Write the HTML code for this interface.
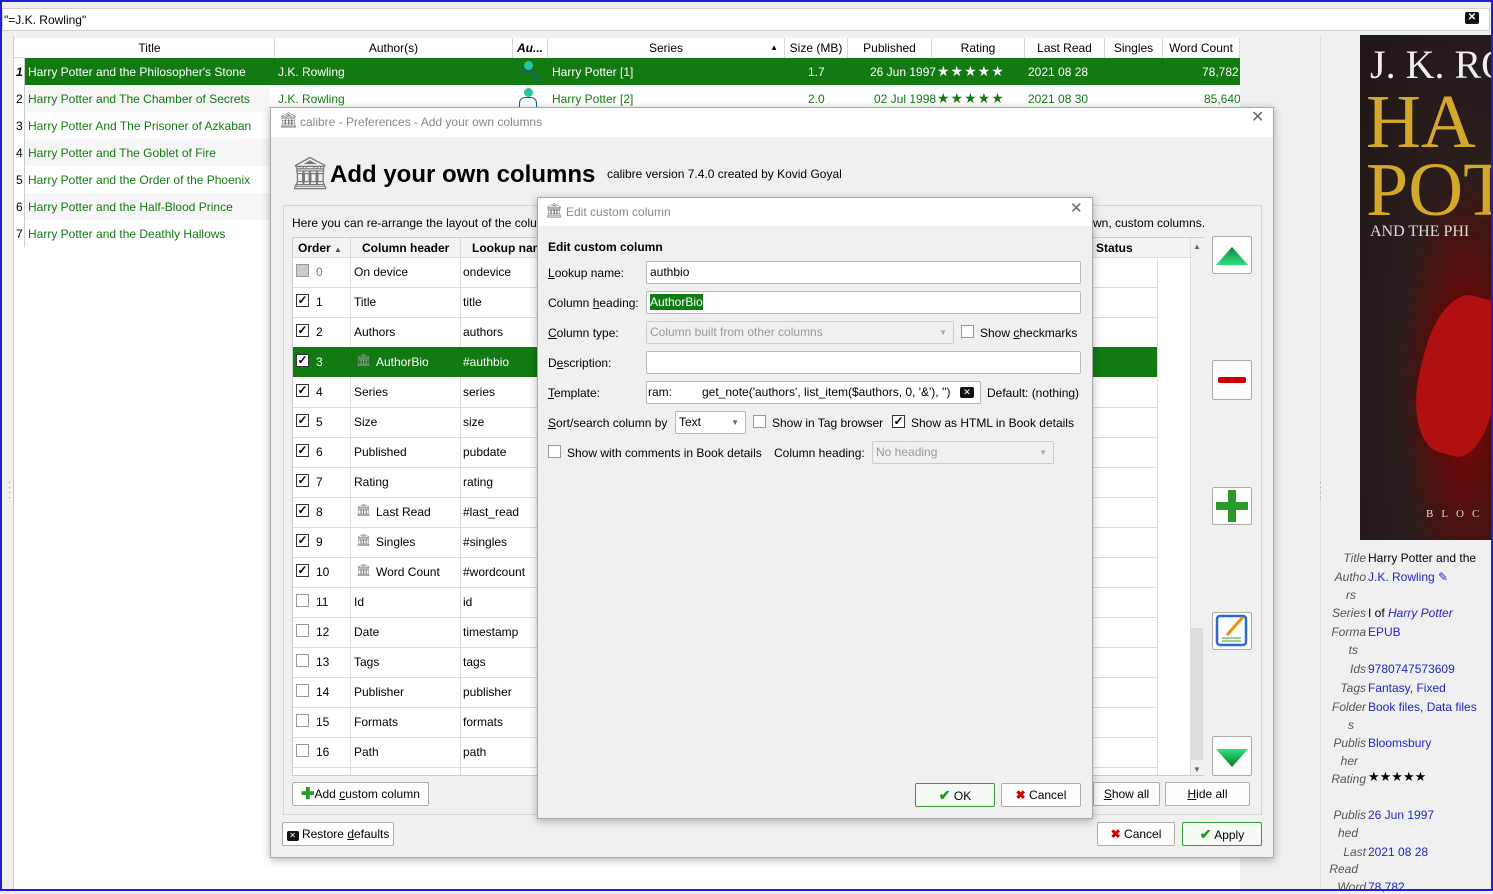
<!DOCTYPE html>
<html><head><meta charset="utf-8">
<style>
*{box-sizing:border-box;margin:0;padding:0}
body{width:1493px;height:891px;overflow:hidden;background:#f0f0f0;font-family:"Liberation Sans",sans-serif;font-size:12px;color:#000;position:relative}
.a{position:absolute}
.t{position:absolute;white-space:nowrap;line-height:14px}
.g{color:#137a13}
.btn{position:absolute;background:#fdfdfd;border:1px solid #adadad;border-radius:2px;text-align:center;line-height:22px;white-space:nowrap}
.cb{position:absolute;width:13px;height:13px;border:1px solid #333;background:#fff;font-size:12px;line-height:11px;text-align:center;font-weight:bold}
.cbe{border-color:#999}
.inp{position:absolute;background:#fff;border:1px solid #b9b9b9;border-radius:2px;height:23px;line-height:21px;padding-left:3px;white-space:nowrap;overflow:hidden}
.dis{background:#f0f0f0;color:#999;border-color:#ccc}
.hd{position:absolute;height:20px;line-height:20px;text-align:center;border-right:1px solid #d8d8d8;background:#fff;white-space:nowrap;overflow:hidden}
.pil{display:inline-block;width:13px;height:13px;vertical-align:-2px}
u{text-decoration:underline}
</style></head><body>
<!-- blue frame -->
<div class="a" style="left:0;top:0;width:1493px;height:891px;border:2px solid #1d1de0;z-index:50;pointer-events:none"></div>
<!-- search -->
<div class="a" style="left:2px;top:8px;width:1488px;height:23px;background:#fff;border:1px solid #cfcfcf"></div>
<div class="t" style="left:4px;top:13px">"=J.K. Rowling"</div>
<div class="t" style="left:1465px;top:12px;width:14px;height:12px;background:#111;color:#fff;font-size:10px;line-height:12px;text-align:center;border-radius:2px;font-weight:bold">✕</div>
<!-- left strip -->
<div class="a" style="left:2px;top:36px;width:12px;height:853px;background:#f0f0f0;border-right:1px solid #ccc"></div>
<!-- book list -->
<div class="a" style="left:14px;top:38px;width:1226px;height:851px;background:#fff"></div>
<div class="a" style="left:14px;top:38px;width:1226px;height:20px;background:#fff;border-bottom:1px solid #d8d8d8"></div>
<div class="hd" style="left:25px;top:38px;width:250px">Title</div>
<div class="hd" style="left:275px;top:38px;width:238px">Author(s)</div>
<div class="hd" style="left:513px;top:38px;width:35px;font-weight:bold;font-style:italic">Au...</div>
<div class="hd" style="left:548px;top:38px;width:237px">Series <span style="position:absolute;right:6px;font-size:8px">▲</span></div>
<div class="hd" style="left:785px;top:38px;width:63px">Size (MB)</div>
<div class="hd" style="left:848px;top:38px;width:84px">Published</div>
<div class="hd" style="left:932px;top:38px;width:93px">Rating</div>
<div class="hd" style="left:1025px;top:38px;width:80px">Last Read</div>
<div class="hd" style="left:1105px;top:38px;width:58px">Singles</div>
<div class="hd" style="left:1163px;top:38px;width:77px">Word Count</div>
<!-- rows -->
<div class="a" style="left:14px;top:58px;width:1226px;height:27px;background:#137a13"></div>
<div class="a" style="left:14px;top:85px;width:256px;height:27px;background:#f6f6f6"></div>
<div class="a" style="left:14px;top:139px;width:256px;height:27px;background:#f6f6f6"></div>
<div class="a" style="left:14px;top:193px;width:256px;height:27px;background:#f6f6f6"></div>
<div class="a" style="left:14px;top:58px;width:11px;height:189px;border-right:1px solid #ccc;background:#fff"></div>
<div class="t" style="left:16px;top:65px;font-weight:bold;font-style:italic">1</div>
<div class="t" style="left:16px;top:92px">2</div><div class="t" style="left:16px;top:119px">3</div><div class="t" style="left:16px;top:146px">4</div><div class="t" style="left:16px;top:173px">5</div><div class="t" style="left:16px;top:200px">6</div><div class="t" style="left:16px;top:227px">7</div>
<div class="t" style="left:28px;top:65px;color:#fff">Harry Potter and the Philosopher's Stone</div>
<div class="t" style="left:278px;top:65px;color:#fff">J.K. Rowling</div>
<div class="t" style="left:552px;top:65px;color:#fff">Harry Potter [1]</div>
<div class="t" style="left:808px;top:65px;color:#fff">1.7</div>
<div class="t" style="left:870px;top:65px;color:#fff">26 Jun 1997</div>
<div class="t" style="left:937px;top:64px;color:#fff;font-size:14px;letter-spacing:1px">★★★★★</div>
<div class="t" style="left:1028px;top:65px;color:#fff">2021 08 28</div>
<div class="t" style="left:1202px;top:65px;color:#fff">78,782</div>
<div class="a" style="left:524px;top:61px;width:9px;height:9px;border-radius:50%;background:#2bc4a0"></div>
<div class="a" style="left:519px;top:70px;width:18px;height:12px;border:1px solid #1a5a9a;border-radius:6px 6px 0 0"></div>
<div class="a" style="left:524px;top:88px;width:9px;height:9px;border-radius:50%;background:#2bc4a0"></div>
<div class="a" style="left:519px;top:97px;width:18px;height:12px;border:1px solid #1a5a9a;border-radius:6px 6px 0 0"></div>
<div class="t g" style="left:28px;top:92px">Harry Potter and The Chamber of Secrets</div>
<div class="t g" style="left:278px;top:92px">J.K. Rowling</div>
<div class="t g" style="left:552px;top:92px">Harry Potter [2]</div>
<div class="t g" style="left:808px;top:92px">2.0</div>
<div class="t g" style="left:874px;top:92px">02 Jul 1998</div>
<div class="t g" style="left:937px;top:91px;font-size:14px;letter-spacing:1px">★★★★★</div>
<div class="t g" style="left:1028px;top:92px">2021 08 30</div>
<div class="t g" style="left:1204px;top:92px">85,640</div>
<div class="t g" style="left:28px;top:119px">Harry Potter And The Prisoner of Azkaban</div>
<div class="t g" style="left:28px;top:146px">Harry Potter and The Goblet of Fire</div>
<div class="t g" style="left:28px;top:173px">Harry Potter and the Order of the Phoenix</div>
<div class="t g" style="left:28px;top:200px">Harry Potter and the Half-Blood Prince</div>
<div class="t g" style="left:28px;top:227px">Harry Potter and the Deathly Hallows</div>
<!-- splitter -->
<div class="a" style="left:1240px;top:38px;width:80px;height:851px;background:#f0f0f0"></div>
<div class="a" style="left:1320px;top:36px;width:1px;height:853px;background:#ddd"></div>
<div class="t" style="left:1319px;top:480px;font-size:8px;line-height:5px;color:#777">·<br>·<br>·<br>·</div>
<div class="t" style="left:8px;top:480px;font-size:8px;line-height:5px;color:#777">·<br>·<br>·<br>·</div>
<!-- cover -->
<div class="a" style="left:1360px;top:35px;width:131px;height:505px;background:radial-gradient(ellipse at 80% 70%,#8a0c0c 0%,#5a0a08 20%,#2a1e1c 45%,#1e1716 100%);overflow:hidden">
<div class="t" style="left:10px;top:8px;color:#eee;font-family:'Liberation Serif',serif;font-size:40px;line-height:44px">J. K. RO</div>
<div class="t" style="left:6px;top:52px;color:#d4a82a;font-family:'Liberation Serif',serif;font-size:76px;line-height:70px">HA</div>
<div class="t" style="left:6px;top:120px;color:#d4a82a;font-family:'Liberation Serif',serif;font-size:76px;line-height:70px">POT</div>
<div class="t" style="left:10px;top:190px;color:#ddd;font-family:'Liberation Serif',serif;font-size:16px">AND THE PHI</div>
<div class="a" style="left:60px;top:260px;width:80px;height:160px;background:#b01010;border-radius:40% 10% 30% 50%;transform:rotate(15deg)"></div>
<div class="t" style="left:66px;top:472px;color:#ddd;font-family:'Liberation Serif',serif;font-size:11px;letter-spacing:8px">BLOC</div>
</div>
<!-- details -->
<div class="a" style="left:1321px;top:545px;width:170px;height:344px;font-size:12px;line-height:18.5px">
<div class="t" style="left:0;top:6px;width:45px;text-align:right;color:#555;font-style:italic">Title</div><div class="t" style="left:47px;top:6px">Harry Potter and the</div>
<div class="t" style="left:0;top:25px;width:45px;text-align:right;color:#555;font-style:italic">Autho</div><div class="t" style="left:47px;top:25px;color:#2424c8">J.K. Rowling <span style="color:#2424c8">✎</span></div>
<div class="t" style="left:0;top:43px;width:35px;text-align:right;color:#555;font-style:italic">rs</div>
<div class="t" style="left:0;top:61px;width:45px;text-align:right;color:#555;font-style:italic">Series</div><div class="t" style="left:47px;top:61px">I of <i style="color:#2424c8">Harry Potter</i></div>
<div class="t" style="left:0;top:80px;width:45px;text-align:right;color:#555;font-style:italic">Forma</div><div class="t" style="left:47px;top:80px;color:#2424c8">EPUB</div>
<div class="t" style="left:0;top:98px;width:37px;text-align:right;color:#555;font-style:italic">ts</div>
<div class="t" style="left:0;top:117px;width:45px;text-align:right;color:#555;font-style:italic">Ids</div><div class="t" style="left:47px;top:117px;color:#2424c8">9780747573609</div>
<div class="t" style="left:0;top:136px;width:45px;text-align:right;color:#555;font-style:italic">Tags</div><div class="t" style="left:47px;top:136px;color:#2424c8">Fantasy, Fixed</div>
<div class="t" style="left:0;top:155px;width:45px;text-align:right;color:#555;font-style:italic">Folder</div><div class="t" style="left:47px;top:155px;color:#2424c8">Book files, Data files</div>
<div class="t" style="left:0;top:173px;width:33px;text-align:right;color:#555;font-style:italic">s</div>
<div class="t" style="left:0;top:191px;width:45px;text-align:right;color:#555;font-style:italic">Publis</div><div class="t" style="left:47px;top:191px;color:#2424c8">Bloomsbury</div>
<div class="t" style="left:0;top:209px;width:37px;text-align:right;color:#555;font-style:italic">her</div>
<div class="t" style="left:0;top:227px;width:45px;text-align:right;color:#555;font-style:italic">Rating</div><div class="t" style="left:47px;top:225px;font-size:13px">★★★★★</div>
<div class="t" style="left:0;top:263px;width:45px;text-align:right;color:#555;font-style:italic">Publis</div><div class="t" style="left:47px;top:263px;color:#2424c8">26 Jun 1997</div>
<div class="t" style="left:0;top:281px;width:37px;text-align:right;color:#555;font-style:italic">hed</div>
<div class="t" style="left:0;top:300px;width:45px;text-align:right;color:#555;font-style:italic">Last</div><div class="t" style="left:47px;top:300px;color:#2424c8">2021 08 28</div>
<div class="t" style="left:0;top:317px;width:37px;text-align:right;color:#555;font-style:italic">Read</div>
<div class="t" style="left:0;top:335px;width:45px;text-align:right;color:#555;font-style:italic">Word</div><div class="t" style="left:47px;top:335px;color:#2424c8">78,782</div>
</div>

<!-- Preferences dialog -->
<div class="a" style="left:270px;top:107px;width:1004px;height:751px;background:#f0f0f0;border:1px solid #aaa;box-shadow:0 2px 8px rgba(0,0,0,.3)"></div>
<div class="a" style="left:271px;top:108px;width:1002px;height:29px;background:#fff"></div>
<div class="t" style="left:279px;top:114px;font-size:15px;color:#777">🏛</div>
<div class="t" style="left:300px;top:115px;color:#888">calibre - Preferences - Add your own columns</div>
<div class="t" style="left:1251px;top:111px;font-size:16px;color:#666">✕</div>
<div class="t" style="left:290px;top:155px;font-size:32px;line-height:36px;color:#777">🏛</div>
<div class="t" style="left:330px;top:161px;font-size:24px;line-height:28px;font-weight:bold">Add your own columns</div>
<div class="t" style="left:607px;top:167px">calibre version 7.4.0 created by Kovid Goyal</div>
<div class="a" style="left:283px;top:205px;width:979px;height:610px;border:1px solid #d5d5d5"></div>
<div class="t" style="left:292px;top:216px">Here you can re-arrange the layout of the colu</div>
<div class="t" style="left:1093px;top:216px">wn, custom columns.</div>
<!-- pref table -->
<div class="a" style="left:292px;top:237px;width:912px;height:539px;background:#fff;border:1px solid #ccc"></div>
<div class="a" style="left:293px;top:238px;width:897px;height:20px;background:#f3f3f3;border-bottom:1px solid #ddd"></div>
<div class="t" style="left:298px;top:241px;font-weight:bold">Order <span style="font-size:8px;color:#555">▲</span></div>
<div class="a" style="left:350px;top:238px;width:1px;height:537px;background:#ddd"></div>
<div class="a" style="left:460px;top:238px;width:1px;height:537px;background:#ddd"></div>
<div class="a" style="left:1157px;top:258px;width:1px;height:517px;background:#ddd"></div>
<div class="t" style="left:362px;top:241px;font-weight:bold">Column header</div>
<div class="t" style="left:472px;top:241px;font-weight:bold">Lookup nam</div>
<div class="t" style="left:1096px;top:241px;font-weight:bold">Status</div>
<div class="a" style="left:1190px;top:238px;width:14px;height:537px;background:#f0f0f0;border-left:1px solid #ddd"></div>
<div class="a" style="left:1191px;top:628px;width:12px;height:132px;background:#ddd"></div>
<div class="t" style="left:1193px;top:240px;font-size:8px;color:#666">▲</div>
<div class="t" style="left:1193px;top:763px;font-size:8px;color:#666">▼</div>
<div class="a" style="left:293px;top:347px;width:864px;height:30px;background:#137a13"></div>
<div id="prows"></div>
<div class="a" style="left:293px;top:287px;width:864px;height:1px;background:#ddd"></div>
<div class="a" style="left:293px;top:317px;width:864px;height:1px;background:#ddd"></div>
<div class="a" style="left:293px;top:407px;width:864px;height:1px;background:#ddd"></div>
<div class="a" style="left:293px;top:437px;width:864px;height:1px;background:#ddd"></div>
<div class="a" style="left:293px;top:467px;width:864px;height:1px;background:#ddd"></div>
<div class="a" style="left:293px;top:497px;width:864px;height:1px;background:#ddd"></div>
<div class="a" style="left:293px;top:527px;width:864px;height:1px;background:#ddd"></div>
<div class="a" style="left:293px;top:557px;width:864px;height:1px;background:#ddd"></div>
<div class="a" style="left:293px;top:587px;width:864px;height:1px;background:#ddd"></div>
<div class="a" style="left:293px;top:617px;width:864px;height:1px;background:#ddd"></div>
<div class="a" style="left:293px;top:647px;width:864px;height:1px;background:#ddd"></div>
<div class="a" style="left:293px;top:677px;width:864px;height:1px;background:#ddd"></div>
<div class="a" style="left:293px;top:707px;width:864px;height:1px;background:#ddd"></div>
<div class="a" style="left:293px;top:737px;width:864px;height:1px;background:#ddd"></div>
<div class="a" style="left:293px;top:767px;width:864px;height:1px;background:#ddd"></div>
<!-- row contents -->
<div class="cb cbe" style="left:296px;top:264px;background:#ccc"></div><div class="t" style="left:316px;top:265px;color:#777">0</div><div class="t" style="left:354px;top:265px">On device</div><div class="t" style="left:463px;top:265px">ondevice</div>
<div class="cb" style="left:296px;top:294px">✓</div><div class="t" style="left:316px;top:295px">1</div><div class="t" style="left:354px;top:295px">Title</div><div class="t" style="left:463px;top:295px">title</div>
<div class="cb" style="left:296px;top:324px">✓</div><div class="t" style="left:316px;top:325px">2</div><div class="t" style="left:354px;top:325px">Authors</div><div class="t" style="left:463px;top:325px">authors</div>
<div class="cb" style="left:296px;top:354px">✓</div><div class="t" style="left:316px;top:355px;color:#fff">3</div><div class="t" style="left:356px;top:353px;color:#999">🏛</div><div class="t" style="left:376px;top:355px;color:#fff">AuthorBio</div><div class="t" style="left:463px;top:355px;color:#fff">#authbio</div>
<div class="cb" style="left:296px;top:384px">✓</div><div class="t" style="left:316px;top:385px">4</div><div class="t" style="left:354px;top:385px">Series</div><div class="t" style="left:463px;top:385px">series</div>
<div class="cb" style="left:296px;top:414px">✓</div><div class="t" style="left:316px;top:415px">5</div><div class="t" style="left:354px;top:415px">Size</div><div class="t" style="left:463px;top:415px">size</div>
<div class="cb" style="left:296px;top:444px">✓</div><div class="t" style="left:316px;top:445px">6</div><div class="t" style="left:354px;top:445px">Published</div><div class="t" style="left:463px;top:445px">pubdate</div>
<div class="cb" style="left:296px;top:474px">✓</div><div class="t" style="left:316px;top:475px">7</div><div class="t" style="left:354px;top:475px">Rating</div><div class="t" style="left:463px;top:475px">rating</div>
<div class="cb" style="left:296px;top:504px">✓</div><div class="t" style="left:316px;top:505px">8</div><div class="t" style="left:356px;top:503px;color:#777">🏛</div><div class="t" style="left:376px;top:505px">Last Read</div><div class="t" style="left:463px;top:505px">#last_read</div>
<div class="cb" style="left:296px;top:534px">✓</div><div class="t" style="left:316px;top:535px">9</div><div class="t" style="left:356px;top:533px;color:#777">🏛</div><div class="t" style="left:376px;top:535px">Singles</div><div class="t" style="left:463px;top:535px">#singles</div>
<div class="cb" style="left:296px;top:564px">✓</div><div class="t" style="left:316px;top:565px">10</div><div class="t" style="left:356px;top:563px;color:#777">🏛</div><div class="t" style="left:376px;top:565px">Word Count</div><div class="t" style="left:463px;top:565px">#wordcount</div>
<div class="cb cbe" style="left:296px;top:594px"></div><div class="t" style="left:316px;top:595px">11</div><div class="t" style="left:354px;top:595px">Id</div><div class="t" style="left:463px;top:595px">id</div>
<div class="cb cbe" style="left:296px;top:624px"></div><div class="t" style="left:316px;top:625px">12</div><div class="t" style="left:354px;top:625px">Date</div><div class="t" style="left:463px;top:625px">timestamp</div>
<div class="cb cbe" style="left:296px;top:654px"></div><div class="t" style="left:316px;top:655px">13</div><div class="t" style="left:354px;top:655px">Tags</div><div class="t" style="left:463px;top:655px">tags</div>
<div class="cb cbe" style="left:296px;top:684px"></div><div class="t" style="left:316px;top:685px">14</div><div class="t" style="left:354px;top:685px">Publisher</div><div class="t" style="left:463px;top:685px">publisher</div>
<div class="cb cbe" style="left:296px;top:714px"></div><div class="t" style="left:316px;top:715px">15</div><div class="t" style="left:354px;top:715px">Formats</div><div class="t" style="left:463px;top:715px">formats</div>
<div class="cb cbe" style="left:296px;top:744px"></div><div class="t" style="left:316px;top:745px">16</div><div class="t" style="left:354px;top:745px">Path</div><div class="t" style="left:463px;top:745px">path</div>
<!-- side buttons -->
<div class="btn" style="left:1212px;top:236px;width:40px;height:38px"><svg width="38" height="36"><defs><linearGradient id="gu" x1="0" y1="0" x2="0" y2="1"><stop offset="0" stop-color="#0a8a3a"/><stop offset="1" stop-color="#2ee07a"/></linearGradient></defs><polygon points="19,10 3,28 35,28" fill="url(#gu)"/></svg></div>
<div class="btn" style="left:1212px;top:360px;width:40px;height:40px"><svg width="38" height="38"><rect x="5" y="16" width="28" height="6" rx="2" fill="#cc0000"/></svg></div>
<div class="btn" style="left:1212px;top:487px;width:40px;height:38px"><svg width="38" height="36"><rect x="15" y="2" width="8" height="32" fill="#2a9a2a"/><rect x="3" y="14" width="32" height="8" fill="#2a9a2a"/></svg></div>
<div class="btn" style="left:1212px;top:612px;width:40px;height:38px"><svg width="38" height="36"><rect x="4" y="3" width="29" height="29" rx="3" fill="none" stroke="#2a6ad0" stroke-width="2.5"/><line x1="14" y1="22" x2="30" y2="4" stroke="#f08a10" stroke-width="3"/><line x1="9" y1="25" x2="28" y2="25" stroke="#3aa03a"/><line x1="9" y1="28" x2="28" y2="28" stroke="#3aa03a"/></svg></div>
<div class="btn" style="left:1212px;top:736px;width:40px;height:40px"><svg width="38" height="38"><defs><linearGradient id="gd" x1="0" y1="0" x2="0" y2="1"><stop offset="0" stop-color="#2ee07a"/><stop offset="1" stop-color="#0a7a2a"/></linearGradient></defs><polygon points="3,12 35,12 19,30" fill="url(#gd)"/></svg></div>
<!-- bottom buttons -->
<div class="btn" style="left:292px;top:782px;width:137px;height:24px"><span style="color:#2a9a2a;font-weight:bold;font-size:16px;line-height:20px;vertical-align:-1px">✚</span>Add <u>c</u>ustom column</div>
<div class="btn" style="left:1093px;top:782px;width:67px;height:24px"><u>S</u>how all</div>
<div class="btn" style="left:1165px;top:782px;width:85px;height:24px"><u>H</u>ide all</div>
<div class="btn" style="left:282px;top:822px;width:112px;height:24px"><span style="display:inline-block;width:12px;height:10px;background:#111;color:#fff;font-size:8px;line-height:10px;border-radius:2px">✕</span> Restore <u>d</u>efaults</div>
<div class="btn" style="left:1097px;top:822px;width:78px;height:24px"><span style="color:#c00;font-weight:bold">✖</span> Cancel</div>
<div class="btn" style="left:1182px;top:822px;width:80px;height:24px;border:1px solid #3a9a3a;background:#f4fbf4"><span style="color:#1a9a1a;font-weight:bold;font-size:14px">✔</span> Apply</div>

<!-- Edit dialog -->
<div class="a" style="left:537px;top:197px;width:556px;height:622px;background:#f0f0f0;border:1px solid #aaa;box-shadow:0 2px 8px rgba(0,0,0,.3)"></div>
<div class="a" style="left:538px;top:198px;width:554px;height:28px;background:#fff"></div>
<div class="t" style="left:545px;top:203px;font-size:14px;color:#777">🏛</div>
<div class="t" style="left:566px;top:205px;color:#888">Edit custom column</div>
<div class="t" style="left:1070px;top:202px;font-size:15px;color:#666">✕</div>
<div class="t" style="left:548px;top:240px;font-weight:bold">Edit custom column</div>
<div class="t" style="left:548px;top:266px"><u>L</u>ookup name:</div>
<div class="inp" style="left:646px;top:261px;width:435px">authbio</div>
<div class="t" style="left:548px;top:296px">Column <u>h</u>eading:</div>
<div class="inp" style="left:646px;top:291px;width:435px"><span style="background:#137a13;color:#fff;padding:1px 0">AuthorBio</span></div>
<div class="t" style="left:548px;top:326px"><u>C</u>olumn type:</div>
<div class="inp dis" style="left:646px;top:321px;width:308px">Column built from other columns<span style="position:absolute;right:6px;font-size:8px;color:#aaa">▼</span></div>
<div class="cb cbe" style="left:961px;top:325px"></div><div class="t" style="left:980px;top:326px">Show <u>c</u>heckmarks</div>
<div class="t" style="left:548px;top:356px">D<u>e</u>scription:</div>
<div class="inp" style="left:646px;top:351px;width:435px"></div>
<div class="t" style="left:548px;top:386px"><u>T</u>emplate:</div>
<div class="inp" style="left:646px;top:381px;width:335px;padding-left:1px">ram:&nbsp;&nbsp;&nbsp;&nbsp;&nbsp;&nbsp;&nbsp;&nbsp;&nbsp;get_note('authors', list_item($authors, 0, '&amp;'), '')<span style="position:absolute;left:313px;top:5px;width:14px;height:11px;background:#111;color:#fff;font-size:9px;line-height:11px;text-align:center;border-radius:2px">✕</span></div>
<div class="t" style="left:987px;top:386px">Default: (nothing)</div>
<div class="t" style="left:548px;top:416px"><u>S</u>ort/search column by</div>
<div class="inp" style="left:675px;top:411px;width:71px">Text<span style="position:absolute;right:6px;font-size:8px;color:#666">▼</span></div>
<div class="cb cbe" style="left:753px;top:415px"></div><div class="t" style="left:772px;top:416px">Show in Tag browser</div>
<div class="cb" style="left:892px;top:415px">✓</div><div class="t" style="left:911px;top:416px">Show as HTML in Book details</div>
<div class="cb cbe" style="left:548px;top:445px"></div><div class="t" style="left:567px;top:446px">Show with comments in Book details</div>
<div class="t" style="left:774px;top:446px">Column heading:</div>
<div class="inp dis" style="left:872px;top:441px;width:182px">No heading<span style="position:absolute;right:6px;font-size:8px;color:#aaa">▼</span></div>
<div class="btn" style="left:915px;top:783px;width:80px;height:24px;border:1px solid #3a9a3a;background:#f4fbf4"><span style="color:#1a9a1a;font-weight:bold;font-size:14px">✔</span> OK</div>
<div class="btn" style="left:1001px;top:783px;width:80px;height:24px"><span style="color:#c00;font-weight:bold">✖</span> Cancel</div>
</body></html>
